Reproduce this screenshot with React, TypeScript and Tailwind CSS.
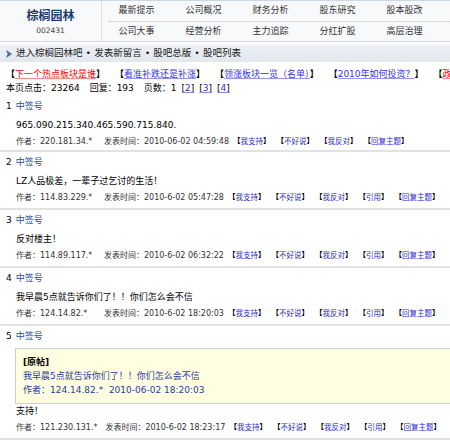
import React from "react";

type Post = {
  n: number;
  content: string;
  ip: string;
  time: string;
  quote?: boolean;
  first?: boolean;
};

const posts: Post[] = [
  { n: 1, content: "965.090.215.340.465.590.715.840.", ip: "220.181.34.*", time: "2010-06-02 04:59:48", first: true },
  { n: 2, content: "LZ人品极差，一辈子过乞讨的生活！", ip: "114.83.229.*", time: "2010-6-02 05:47:28" },
  { n: 3, content: "反对楼主！", ip: "114.89.117.*", time: "2010-6-02 06:32:22" },
  { n: 4, content: "我早晨5点就告诉你们了！！你们怎么会不信", ip: "124.14.82.*", time: "2010-6-02 18:20:03" },
  { n: 5, content: "支持！", ip: "121.230.131.*", time: "2010-6-02 18:23:17", quote: true },
];

const navTop = ["最新提示", "公司概况", "财务分析", "股东研究", "股本股改"];
const navBottom = ["公司大事", "经营分析", "主力追踪", "分红扩股", "高层治理"];

const hotLinks = [
  { text: "下一个热点板块是谁", red: true },
  { text: "看准补跌还是补涨" },
  { text: "领涨板块一览（名单）" },
  { text: "2010年如何投资？" },
  { text: "政策利好板块有哪些", red: true },
];

function Bracketed({ label }: { label: string }) {
  return (
    <span className="shrink-0 whitespace-nowrap">
      <span className="font-bold text-black">【</span>
      <a className="text-[#2b2bcc]">{label}</a>
      <span className="font-bold text-black">】</span>
    </span>
  );
}

function PostItem({ post }: { post: Post }) {
  const links = post.first
    ? ["我支持", "不好说", "我反对", "回复主题"]
    : ["我支持", "不好说", "我反对", "引用", "回复主题"];
  return (
    <div className={post.first ? "border-b-2 border-[#e2e2e2]" : "border-b-2 border-[#e2e2e2] pb-[2px]"}>
      <div className="flex h-[22px] items-center pl-[6px] text-[9px]">
        <span className="text-black">{post.n}</span>
        <span className="ml-[4px] text-[#27509f]">中签号</span>
      </div>
      {post.quote && (
        <div className="ml-[15px] border border-r-0 border-[#cfcfcf] bg-[#fffee0] pb-[5px] pl-[7px] pt-[7px] text-[9px]">
          <div className="flex h-[14px] items-center font-bold text-black">[原帖]</div>
          <div className="flex h-[14px] items-center text-[#1f3d9e]">我早晨5点就告诉你们了！！你们怎么会不信</div>
          <div className="flex h-[14px] items-center text-[#1f3d9e]">作者：124.14.82.*&nbsp;&nbsp;2010-06-02 18:20:03</div>
        </div>
      )}
      <div className="flex h-[16px] items-center pl-[16px] text-[9px] text-black">{post.content}</div>
      <div className="flex h-[16px] items-center whitespace-nowrap pl-[16px] text-[8px] text-[#333]">
        <span className="min-w-[88px] shrink-0 pr-[8px]">作者：{post.ip}</span>
        <span className="min-w-[124px] shrink-0 pr-[4px]">发表时间：{post.time}</span>
        <span className="flex shrink-0 gap-[6px] text-[7.5px]">
          {links.map((l) => (
            <Bracketed key={l} label={l} />
          ))}
        </span>
      </div>
    </div>
  );
}

export default function App() {
  return (
    <div className="h-[444px] w-[450px] overflow-hidden bg-white font-['DejaVu_Sans','Noto_Sans_CJK_SC',sans-serif]">
      {/* stock header */}
      <div className="flex h-[42px] border-b border-t border-[#cdd7e0] bg-[#f7f9fb]">
        <div className="flex w-[102px] flex-col items-center border-r border-[#d8dfe6] pt-[8px]">
          <div className="h-[14px] text-[12px] font-bold leading-[14px] text-[#1b3a6b]">棕榈园林</div>
          <div className="mt-[4px] text-[7.5px] leading-[8px] text-[#444]">002431</div>
        </div>
        <div className="flex flex-1 flex-col">
          <div className="grid h-[20px] grid-cols-[repeat(5,67px)] items-center pl-[1px] text-center text-[9px] text-[#333]">
            {navTop.map((t) => (
              <span key={t}>{t}</span>
            ))}
          </div>
          <div className="ml-[6px] border-b border-dotted border-[#c4c4c4]" />
          <div className="grid h-[19px] grid-cols-[repeat(5,67px)] items-center pl-[1px] text-center text-[9px] text-[#333]">
            {navBottom.map((t) => (
              <span key={t}>{t}</span>
            ))}
          </div>
        </div>
      </div>

      {/* forum nav bar */}
      <div className="mt-[2px] flex h-[18px] items-center border-t border-[#f4f7fa] bg-gradient-to-b from-[#edf1f5] to-[#e1e7ed] pl-[6px] text-[9.5px] text-[#222]">
        <svg width="6" height="8" viewBox="0 0 6 8" className="mr-[4px]">
          <polygon points="0,0 6,4 0,8 1.6,4" fill="#3a6cb4" />
        </svg>
        <span>进入棕榈园林吧 • 发表新留言 • 股吧总版 • 股吧列表</span>
      </div>

      {/* hot links */}
      <div className="mt-[5px] flex h-[15px] items-center gap-[10px] overflow-hidden whitespace-nowrap pl-[6px] text-[9px]">
        {hotLinks.map((h) => (
          <span key={h.text}>
            <span className="font-bold text-black">【</span>
            <a
              className={
                h.red
                  ? "text-[#ff0000] underline decoration-[#ff8a8a]"
                  : "text-[#3535e6] underline decoration-[#9494ff]"
              }
            >
              {h.text}
            </a>
            <span className="font-bold text-black">】</span>
          </span>
        ))}
      </div>

      {/* page stats */}
      <div className="flex h-[14px] items-center whitespace-nowrap pl-[6px] text-[9px] text-black">
        <span>本页点击：23264</span>
        <span className="ml-[10px]">回复：193</span>
        <span className="ml-[10px]">页数：1</span>
        {["2", "3", "4"].map((p) => (
          <span key={p} className="ml-[5px] underline decoration-[#8a8ad8]">
            [<a className="text-[#3333cc]">{p}</a>]
          </span>
        ))}
      </div>

      {/* posts */}
      <div>
        {posts.map((p) => (
          <PostItem key={p.n} post={p} />
        ))}
      </div>
    </div>
  );
}
